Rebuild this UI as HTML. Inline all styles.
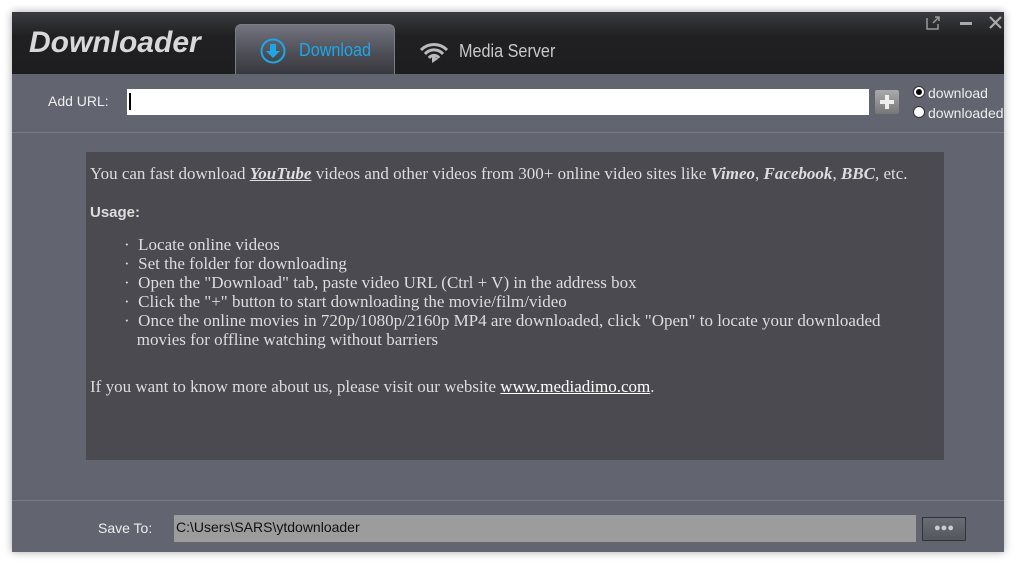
<!DOCTYPE html>
<html><head><style>
*{margin:0;padding:0;box-sizing:border-box}
body{width:1016px;height:564px;background:#fff;position:relative;overflow:hidden;font-family:"Liberation Sans",sans-serif}
.win{position:absolute;left:12px;top:12px;width:992px;height:540px;background:#62646f;box-shadow:0 0 8px rgba(0,0,0,.35)}
.title{position:absolute;left:0;top:0;width:992px;height:62px;background:linear-gradient(#3a3b3f,#202022 40%,#1e1e20)}
.logo{position:absolute;left:17px;top:14px;font:italic bold 30px "Liberation Sans",sans-serif;color:#d8d8d8}
.tab{position:absolute;left:223px;top:12px;width:160px;height:50px;border-radius:6px 6px 0 0;background:linear-gradient(#72747f,#4c4d54 60%,#38393e);border:1px solid #7a7c86;border-bottom:none}
.tab span{position:absolute;left:63px;top:15px;font-size:18px;color:#1aa8e8;transform:scaleX(.9);transform-origin:left}
.ms{position:absolute;left:447px;top:29px;font-size:18px;color:#c8c8c8;transform:scaleX(.9);transform-origin:left}
.t{position:absolute;color:#eee;font-size:14px}
.url{position:absolute;left:115px;top:77px;width:742px;height:26px;background:#fff}
.url i{position:absolute;left:2px;top:4px;width:2px;height:17px;background:#000}
.plus{position:absolute;left:863px;top:78px;width:24px;height:24px;background:linear-gradient(#aaa,#777);border-radius:2px}
.sep{position:absolute;left:0;width:992px;height:1px;background:#787a85}
.box{position:absolute;left:74px;top:140px;width:858px;height:308px;background:#4a4a50;color:#ddd;font-family:"Liberation Serif",serif;font-size:17px}
.box p{position:absolute;left:4px;white-space:nowrap}
.rd{position:absolute;width:12px;height:12px;border-radius:50%;background:#fff;border:1px solid #333}
</style></head><body>
<div class="win">
<div class="title">
<div class="logo">Downloader</div>
<div class="tab">
<svg style="position:absolute;left:24px;top:13px" width="26" height="26" viewBox="0 0 26 26"><circle cx="13" cy="13" r="11.5" fill="none" stroke="#1aa8e8" stroke-width="2"/><path d="M10 6h6v7h4l-7 7-7-7h4z" fill="#1aa8e8"/></svg>
<span>Download</span></div>
<svg style="position:absolute;left:406px;top:26px" width="32" height="26" viewBox="0 0 32 26"><path d="M3 12a18 18 0 0 1 26 0M7 16a12 12 0 0 1 18 0M11 20a6 6 0 0 1 10 0" fill="none" stroke="#bbb" stroke-width="3"/><path d="M14 17l6 4-6 4z" fill="#bbb"/></svg>
<div class="ms">Media Server</div>
<svg style="position:absolute;left:914px;top:4px" width="14" height="14" viewBox="0 0 14 14"><path d="M1 2v11h11V8M7 7l6-6M9 1h4v4" fill="none" stroke="#999" stroke-width="1.5"/></svg>
<div style="position:absolute;left:948px;top:10px;width:12px;height:3px;background:#aaa"></div>
<svg style="position:absolute;left:977px;top:4px" width="13" height="13" viewBox="0 0 13 13"><path d="M1 1l11 11M12 1L1 12" stroke="#aaa" stroke-width="2.2"/></svg>
</div>
<div class="t" style="left:36px;top:81px">Add URL:</div>
<div class="url"><i></i></div>
<div class="plus"><div style="position:absolute;left:5px;top:10px;width:14px;height:4px;background:#eee"></div><div style="position:absolute;left:10px;top:5px;width:4px;height:14px;background:#eee"></div></div>
<div class="rd" style="left:901px;top:74px"><div style="margin:2px;width:6px;height:6px;border-radius:50%;background:#000"></div></div>
<div class="t" style="left:916px;top:73px">download</div>
<div class="rd" style="left:901px;top:94px"></div>
<div class="t" style="left:916px;top:93px">downloaded</div>
<div class="sep" style="top:120px"></div>
<div class="box">
<p style="top:12px">You can fast download <b><i><u>YouTube</u></i></b> videos and other videos from 300+ online video sites like <b><i>Vimeo</i></b>, <b><i>Facebook</i></b>, <b><i>BBC</i></b>, etc.</p>
<p style="top:52px;font:bold 15px 'Liberation Sans',sans-serif">Usage:</p>
<p style="top:83px;left:38px;line-height:19px">·&nbsp; Locate online videos<br>·&nbsp; Set the folder for downloading<br>·&nbsp; Open the "Download" tab, paste video URL (Ctrl + V) in the address box<br>·&nbsp; Click the "+" button to start downloading the movie/film/video<br>·&nbsp; Once the online movies in 720p/1080p/2160p MP4 are downloaded, click "Open" to locate your downloaded<br>&nbsp;&nbsp;&nbsp;movies for offline watching without barriers</p>
<p style="top:225px">If you want to know more about us, please visit our website <u style="color:#fff">www.mediadimo.com</u>.</p>
</div>
<div class="sep" style="top:488px"></div>
<div class="t" style="left:86px;top:508px">Save To:</div>
<div style="position:absolute;left:162px;top:503px;width:742px;height:27px;background:#9c9c9c;color:#111;font-size:14px;padding:4px 2px">C:\Users\SARS\ytdownloader</div>
<div style="position:absolute;left:910px;top:505px;width:44px;height:24px;border:1px solid #333;background:linear-gradient(#6a6c76,#54565f);color:#ccc;font-size:11px;text-align:center;line-height:20px">●●●</div>
</div>
</body></html>
